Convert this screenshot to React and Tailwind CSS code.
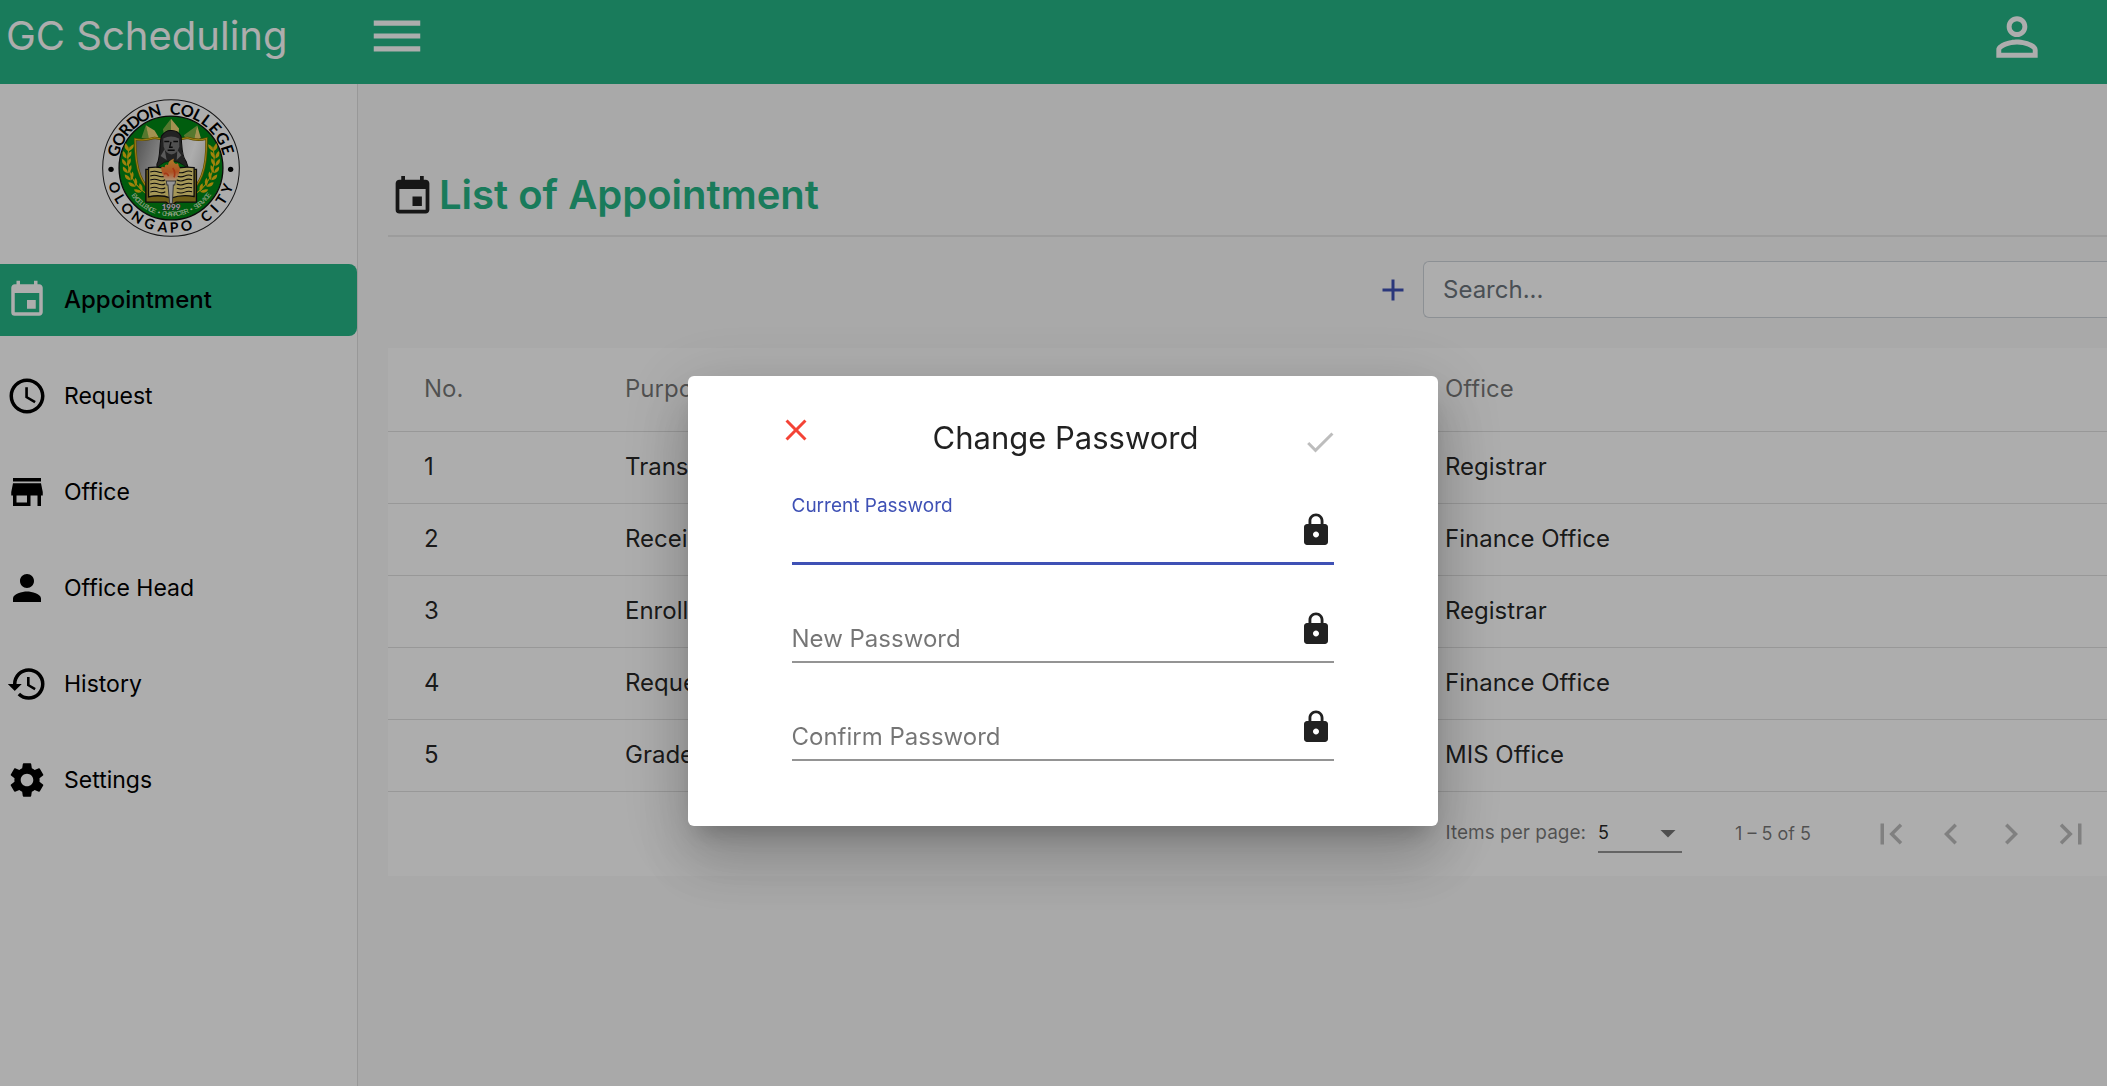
import React from "react";
import {
  MdAccessTime,
  MdAdd,
  MdArrowDropDown,
  MdCheck,
  MdChevronLeft,
  MdChevronRight,
  MdClose,
  MdEvent,
  MdFirstPage,
  MdHistory,
  MdLastPage,
  MdLock,
  MdMenu,
  MdPerson,
  MdPersonOutline,
  MdSettings,
  MdStore,
} from "react-icons/md";

const navItems = [
  { label: "Appointment", Icon: MdEvent, active: true },
  { label: "Request", Icon: MdAccessTime },
  { label: "Office", Icon: MdStore },
  { label: "Office Head", Icon: MdPerson },
  { label: "History", Icon: MdHistory },
  { label: "Settings", Icon: MdSettings },
];

const appointments = [
  { no: 1, purpose: "Transcript", office: "Registrar" },
  { no: 2, purpose: "Receipt", office: "Finance Office" },
  { no: 3, purpose: "Enrollment", office: "Registrar" },
  { no: 4, purpose: "Request", office: "Finance Office" },
  { no: 5, purpose: "Grades", office: "MIS Office" },
];

// Letters of the seal's rim with their angle in degrees.
const topLetters = [
  ["G", -73], ["O", -61], ["R", -50], ["D", -39], ["O", -28], ["N", -16],
  ["C", 4], ["O", 16], ["L", 27], ["L", 37], ["E", 48], ["G", 60], ["E", 72],
];
const bottomLetters = [
  ["O", 71], ["L", 59], ["O", 47], ["N", 34], ["G", 21], ["A", 8], ["P", -3],
  ["O", -15], ["C", -36], ["I", -47], ["T", -58], ["Y", -70],
];
const mottoLetters = [..."EXCELLENCE • CHARACTER • SERVICE"];

// Leaf pairs along the branch, from the tip down to the stem.
const leaves = [
  [145, 204, 10], [139, 226, 4], [138, 248, -2], [141, 270, -8],
  [148, 291, -18], [160, 311, -30], [177, 328, -45],
];

function Laurel() {
  return (
    <g fill="#eec111">
      <path d="M146 200 Q128 290 196 340" fill="none" stroke="#eec111" strokeWidth="3" />
      {leaves.map(([x, y, angle]) => (
        <g key={y} transform={`translate(${x} ${y}) rotate(${angle})`}>
          <path d="M0 10 Q-17 4 -12 -12 Q1 -4 0 10Z" />
          <path d="M1 10 Q16 2 13 -13 Q0 -6 1 10Z" />
        </g>
      ))}
    </g>
  );
}

function Seal() {
  return (
    <svg viewBox="65 58 412 412" className="size-[138px]" role="img" aria-label="Gordon College, Olongapo City">
      <defs>
        <linearGradient id="shield" x1="0" y1="0" x2="1" y2="0.3">
          <stop offset="0" stopColor="#777" />
          <stop offset="0.6" stopColor="#eee" />
          <stop offset="0.8" stopColor="#fff" />
          <stop offset="1" stopColor="#ddd" />
        </linearGradient>
        <linearGradient id="flame" x1="0" y1="0" x2="0" y2="1">
          <stop offset="0" stopColor="#ffb43c" />
          <stop offset="0.6" stopColor="#ff7a35" />
          <stop offset="1" stopColor="#ffd9b0" />
        </linearGradient>
      </defs>
      <circle cx="271" cy="264" r="204" fill="#fff" stroke="#222" strokeWidth="3" />
      <circle cx="271" cy="264" r="155" fill="#008a16" stroke="#111" strokeWidth="4" />
      <g fontFamily="Lato, 'Liberation Sans', sans-serif" fontWeight="700" fontSize="48" textAnchor="middle" fill="#000">
        {topLetters.map(([c, a], i) => (
          <text key={i} x="271" y="104" transform={`rotate(${a} 271 264)`}>{c}</text>
        ))}
        {bottomLetters.map(([c, a], i) => (
          <text key={i} x="271" y="457" fontSize="42" transform={`rotate(${a} 271 264)`}>{c}</text>
        ))}
      </g>
      <circle cx="92" cy="268" r="8" />
      <circle cx="449" cy="268" r="8" />
      {/* mountains */}
      <path d="M196 136 L183 174 L208 180Z M271 117 L247 148 L252 176 H271Z M349 137 L309 166 L316 178 H340Z" fill="#7fb245" />
      <path d="M196 136 L206 180 L234 172 L222 152Z M271 117 L295 146 L292 176 H271Z M349 137 L340 178 H354 L360 174Z" fill="#f0d878" />
      {/* shield */}
      <path d="M164 178 Q190 184 222 174 Q271 186 320 174 Q352 184 377 176 C378 250 374 330 271 372 C168 330 164 250 164 178Z" fill="url(#shield)" stroke="#8a6d00" strokeWidth="7" />
      <path d="M164 178 Q190 184 222 174 Q271 186 320 174 Q352 184 377 176 C378 250 374 330 271 372 C168 330 164 250 164 178Z" fill="none" stroke="#e8c41e" strokeWidth="3" />
      <Laurel />
      <g transform="translate(542 0) scale(-1 1)"><Laurel /></g>
      {/* bust */}
      <path d="M229 252 C240 236 236 184 243 168 Q255 151 271 152 Q292 151 301 170 C304 194 302 230 316 244 L322 262 H229Z" fill="#333" stroke="#111" strokeWidth="3" />
      <path d="M248 176 Q271 164 295 176 L296 200 Q290 222 272 224 Q254 220 249 200Z" fill="#777" />
      <path d="M251 185 H266 M278 185 H292 M271 186 L267 202 H276 M261 211 H282" stroke="#111" strokeWidth="4" fill="none" />
      <path d="M240 228 L252 208 L258 240Z M302 226 L290 210 L288 240Z" fill="#858585" />
      <path d="M230 262 Q271 222 318 262Z" fill="#008a16" stroke="#111" strokeWidth="2" />
      {/* book */}
      <path d="M196 268 V366 H256 L271 377 L286 366 H347 V268Z" fill="#a58c24" stroke="#111" strokeWidth="4" />
      <path d="M204 263 Q240 258 271 270 Q302 258 340 263 V349 Q302 342 271 354 Q240 342 204 350Z" fill="#f4df80" stroke="#111" strokeWidth="4" />
      <g stroke="#111" strokeWidth="3" fill="none">
        {[0, 1, 2, 3, 4, 5].map((i) => (
          <path key={i} d={`M209 ${276 + i * 12} q13 -5 24 0 t21 -1 M288 ${276 + i * 12} q13 5 24 0 t22 -1`} />
        ))}
      </g>
      {/* torch */}
      <path d="M243 272 Q238 255 252 262 Q252 250 262 255 Q263 242 280 236 Q275 248 286 252 Q294 246 294 258 Q300 262 296 276 Q290 296 282 302 H258 Q246 290 243 272Z" fill="url(#flame)" />
      <path d="M250 282 Q258 276 264 288 M276 264 Q286 276 280 292" stroke="#f4511e" strokeWidth="5" fill="none" />
      <path d="M257 303 H285 L282 315 H278 L275 370 H267 L262 315 H259Z" fill="#ddd" stroke="#555" strokeWidth="3" />
      <text x="271" y="389" textAnchor="middle" fontFamily="Lato, sans-serif" fontWeight="700" fontSize="24" fill="#eee" stroke="#333" strokeWidth="3" paintOrder="stroke">1999</text>
      <g fontFamily="'Liberation Sans', sans-serif" fontSize="20" textAnchor="middle" fill="#e5f5d6">
        {mottoLetters.map((c, i) => (
          <text key={i} x="271" y="408" transform={`rotate(${53 - i * 3.45} 271 264)`}>{c}</text>
        ))}
      </g>
    </svg>
  );
}

function NavLink({ label, Icon, active }) {
  return (
    <a
      href="#"
      aria-current={active ? "page" : undefined}
      className={
        active
          ? "flex h-[72px] items-center gap-4 rounded-r-lg bg-[#26b587] pl-1.5 text-2xl font-medium text-black"
          : "flex h-[72px] items-center gap-4 rounded-r-lg pl-1.5 text-[23px] text-black"
      }
    >
      <Icon className={active ? "size-[42px] text-white" : "size-[42px]"} />
      {label}
    </a>
  );
}

function PasswordField({ id, label, focused }) {
  return (
    <div
      className={
        focused
          ? "relative flex h-[75px] items-start justify-between border-b-[3px] border-[#3f51b5]"
          : "relative flex h-[74px] items-start justify-between border-b-2 border-[#949494]"
      }
    >
      <label
        htmlFor={id}
        className={
          focused
            ? "absolute top-1 left-0 text-[19px] leading-6 text-[#3f51b5]"
            : "absolute bottom-1.5 left-0 text-2xl leading-8 text-black/54"
        }
      >
        {label}
      </label>
      <input id={id} type="password" className="h-full min-w-0 flex-1 bg-transparent pt-6 text-2xl outline-none" />
      <MdLock className="mt-[22px] size-9 text-[#212121]" />
    </div>
  );
}

const pageButtons = [
  { label: "First page", Icon: MdFirstPage },
  { label: "Previous page", Icon: MdChevronLeft },
  { label: "Next page", Icon: MdChevronRight },
  { label: "Last page", Icon: MdLastPage },
];

export default function App() {
  return (
    <div className="flex min-h-screen flex-col overflow-hidden bg-[#fafafa] font-['Inter','Liberation_Sans',sans-serif] text-black/87">
      <header className="flex h-[84px] items-start justify-between bg-[#26b587] pr-[59px] pl-1.5 text-white">
        <div className="flex items-center">
          <span className="w-[360px] text-[40px] leading-[72px]">GC Scheduling</span>
          <button type="button" aria-label="Toggle menu">
            <MdMenu className="size-[62px]" />
          </button>
        </div>
        <button type="button" aria-label="Account" className="mt-1.5">
          <MdPersonOutline className="size-[62px]" />
        </button>
      </header>

      <div className="flex flex-1">
        <aside className="w-[358px] shrink-0 border-r border-black/12 bg-white">
          <div className="flex h-[180px] justify-center pt-[15px] pr-4">
            <Seal />
          </div>
          <nav className="flex flex-col gap-6">
            {navItems.map((item) => (
              <NavLink key={item.label} {...item} />
            ))}
          </nav>
        </aside>

        <main className="min-w-0 flex-1 pl-[30px]">
          <div className="flex h-[153px] items-end gap-1 border-b-2 border-black/8 pb-4 pl-0.5">
            <MdEvent className="size-[45px]" />
            <h1 className="text-[40px] leading-[48px] font-semibold text-[#26b587]">List of Appointment</h1>
          </div>

          <div className="flex items-center justify-end gap-3 pt-6 pb-[30px]">
            <button type="button" aria-label="Add appointment" className="p-0 text-[#3f51b5]">
              <MdAdd className="size-9" />
            </button>
            <input
              type="search"
              aria-label="Search"
              placeholder="Search..."
              className="h-[57px] w-[684px] rounded-l-md border border-r-0 border-[#ced4da] bg-white px-[19px] text-2xl outline-none placeholder:text-[#6c757d]"
            />
          </div>

          <section className="bg-white">
            <table className="w-full table-fixed text-left text-2xl">
              <thead>
                <tr className="h-[83px] border-b border-black/12 text-black/54">
                  <th className="w-[237px] pl-9 font-normal">No.</th>
                  <th className="w-[820px] font-normal">Purpose</th>
                  <th className="font-normal">Office</th>
                </tr>
              </thead>
              <tbody>
                {appointments.map((row) => (
                  <tr key={row.no} className="h-[72px] border-b border-black/12">
                    <td className="pl-9">{row.no}</td>
                    <td>{row.purpose}</td>
                    <td>{row.office}</td>
                  </tr>
                ))}
              </tbody>
            </table>
            <div className="flex h-[84px] items-center justify-end pr-1.5 text-[19px] text-black/54">
              <label htmlFor="page-size" className="pr-3">Items per page:</label>
              <span className="relative mt-1 flex items-center border-b-2 border-black/42">
                <select id="page-size" defaultValue="5" className="h-8 w-[84px] appearance-none bg-transparent pb-1 text-lg text-black/87 outline-none">
                  <option>5</option>
                  <option>10</option>
                </select>
                <MdArrowDropDown className="pointer-events-none absolute -top-1 right-[-4px] size-9" />
              </span>
              <span className="w-[179px] pl-[53px] text-lg">1 – 5 of 5</span>
              {pageButtons.map(({ label, Icon }) => (
                <button key={label} type="button" aria-label={label} disabled className="flex size-[60px] items-center justify-center text-black/26">
                  <Icon className="size-[42px]" />
                </button>
              ))}
            </div>
          </section>
        </main>
      </div>

      <div className="fixed inset-0 flex items-start justify-center bg-black/32 pt-[376px] pl-[18px]">
        <form
          role="dialog"
          aria-labelledby="dialog-title"
          className="h-[450px] w-[750px] rounded-md bg-white px-[104px] pt-8 shadow-[0_16px_22px_-10px_rgba(0,0,0,0.2),0_36px_57px_4px_rgba(0,0,0,0.14),0_14px_69px_12px_rgba(0,0,0,0.12)]"
        >
          <div className="-ml-3.5 -mr-1 flex h-[82px] items-start">
            <button type="button" aria-label="Cancel" className="pt-1 text-[#f44336]">
              <MdClose className="size-9" />
            </button>
            <h2 id="dialog-title" className="flex-1 pt-2.5 pl-4 text-center text-[31px] leading-[40px]">Change Password</h2>
            <button type="submit" aria-label="Save" disabled className="pt-4 text-black/26">
              <MdCheck className="size-9" />
            </button>
          </div>
          <div className="flex flex-col gap-6">
            <PasswordField id="current" label="Current Password" focused />
            <PasswordField id="new" label="New Password" />
            <PasswordField id="confirm" label="Confirm Password" />
          </div>
        </form>
      </div>
    </div>
  );
}
